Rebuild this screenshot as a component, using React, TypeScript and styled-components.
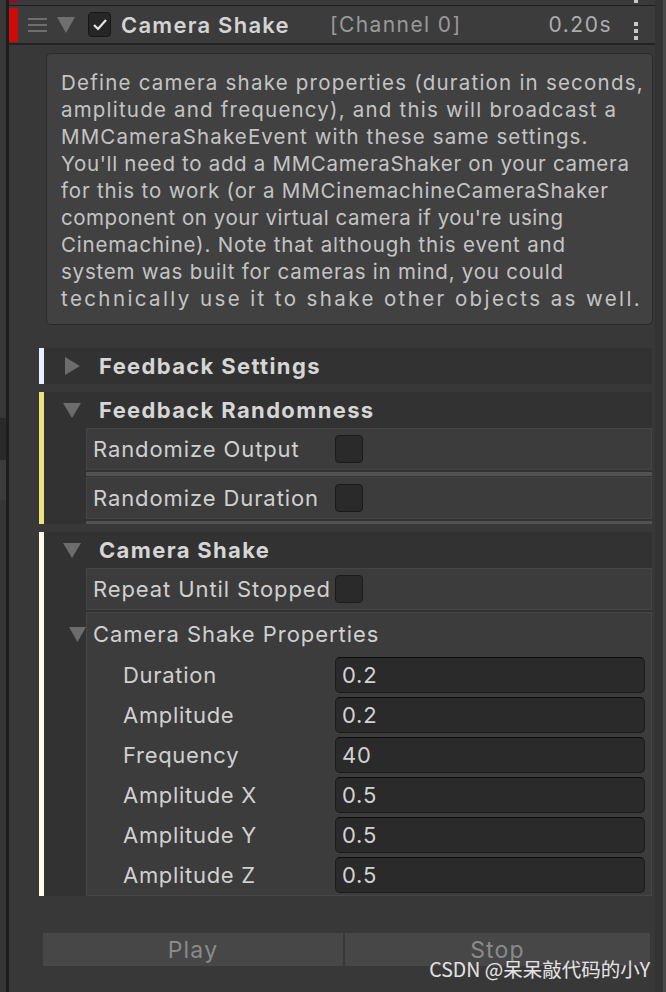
import React from "react";
import styled, { createGlobalStyle } from "styled-components";

const GlobalStyle = createGlobalStyle`
  html, body {
    margin: 0;
    padding: 0;
    background: #383838;
  }
  body {
    font-family: Inter, "Noto Sans", sans-serif;
  }
`;

const Root = styled.div`
  position: relative;
  display: flex;
  width: 666px;
  height: 992px;
  overflow: hidden;
  background: #383838;
`;

const Gutter = styled.div`
  width: 6px;
  display: flex;
  flex-direction: column;
  border-right: 3px solid #1d1d1d;
  background: #363636;
`;

const GutterBlock = styled.div<{ tone: string; h: number }>`
  height: ${(p) => p.h}px;
  background: ${(p) => p.tone};
`;

const Main = styled.div`
  flex: 1;
  display: flex;
  flex-direction: column;
  min-width: 0;
`;

const Scrollbar = styled.div`
  width: 8px;
  background: #333333;
  border-right: 3px solid #484848;
`;

const TopStub = styled.div`
  height: 5px;
  display: flex;
  background: #3a3a3a;
`;

const StubRed = styled.div`
  width: 9px;
  height: 3px;
  background: #8a1030;
`;

const StubDot = styled.div`
  width: 4px;
  height: 3px;
  margin-left: auto;
  margin-right: 17px;
  background: #c8c8c8;
`;

const Header = styled.div`
  height: 37px;
  display: flex;
  align-items: center;
  background: #3c3c3c;
  border-top: 1px solid #1f1f1f;
  border-bottom: 2px solid #232323;
`;

const RedBar = styled.div`
  width: 9px;
  height: 34px;
  background: #d00a0a;
`;

const Hamburger = styled.div`
  width: 19px;
  margin-left: 10px;
  display: flex;
  flex-direction: column;
  gap: 4px;
  span {
    height: 2px;
    background: #6e6e6e;
  }
`;

const HeaderCheck = styled.div`
  width: 21px;
  height: 23px;
  margin-left: 13px;
  border-radius: 4px;
  background: #262626;
  border: 1px solid #161616;
  display: flex;
  align-items: center;
  justify-content: center;
`;

const Title = styled.div`
  width: 209px;
  margin-left: 10px;
  font-size: 22px;
  font-weight: 600;
  letter-spacing: 1.25px;
  color: #d4d4d4;
  white-space: nowrap;
`;

const Channel = styled.div`
  flex: 1;
  font-size: 21px;
  letter-spacing: 1.4px;
  color: #9a9a9a;
  white-space: nowrap;
`;

const Duration = styled.div`
  font-size: 21px;
  letter-spacing: 1.5px;
  color: #acacac;
`;

const Kebab = styled.div`
  width: 4px;
  margin: 12px 17px 0 22px;
  display: flex;
  flex-direction: column;
  gap: 3px;
  span {
    height: 4px;
    background: #c8c8c8;
  }
`;

const Body = styled.div`
  padding: 8px 3px 0 30px;
  display: flex;
  flex-direction: column;
`;

const HelpBox = styled.div`
  margin: 0 -1px 0 7px;
  padding: 15px 0 12px 14px;
  border: 1px solid #2a2a2a;
  border-radius: 5px;
  background: #414141;
  color: #c4c4c4;
  font-size: 20.5px;
  line-height: 27px;
`;

const HelpLine = styled.div<{ spacing: number }>`
  white-space: nowrap;
  letter-spacing: ${(p) => p.spacing}px;
`;

const Sections = styled.div`
  margin-top: 23px;
  display: flex;
  flex-direction: column;
  gap: 8px;
`;

const Section = styled.div`
  display: flex;
`;

const SectionBar = styled.div<{ color: string }>`
  width: 5px;
  background: ${(p) => p.color};
`;

const SectionContent = styled.div`
  flex: 1;
  background: #323232;
`;

const SectionHeader = styled.div`
  height: 36px;
  display: flex;
  align-items: center;
  padding-left: 19px;
`;

const IconSlot = styled.div`
  width: 18px;
  display: flex;
  justify-content: center;
  align-items: center;
`;

const SectionTitle = styled.div`
  margin-left: 18px;
  font-size: 22px;
  font-weight: 700;
  color: #d6d6d6;
  letter-spacing: 1.35px;
`;

const SectionBody = styled.div`
  padding-left: 42px;
  display: flex;
  flex-direction: column;
`;

const Row = styled.div`
  height: 42px;
  box-sizing: border-box;
  display: flex;
  align-items: center;
  padding-left: 6px;
  border: 1px solid #454545;
  background: #3c3c3c;
`;

const RowLabel = styled.div<{ w: number; spacing?: number }>`
  width: ${(p) => p.w}px;
  font-size: 22px;
  letter-spacing: ${(p) => p.spacing ?? 0.9}px;
  color: #d0d0d0;
  white-space: nowrap;
`;

const Separator = styled.div`
  height: 4px;
  margin-top: 2px;
  background: #525252;
`;

const Checkbox = styled.div`
  width: 26px;
  height: 26px;
  border-radius: 4px;
  background: #2a2a2a;
  border: 1px solid #1a1a1a;
`;

const PropBox = styled.div`
  margin-top: 2px;
  border: 1px solid #464646;
  background: #3c3c3c;
`;

const PropHeader = styled.div`
  height: 42px;
  display: flex;
  align-items: center;
`;

const PropTri = styled.div`
  width: 17px;
  margin-left: -18px;
  display: flex;
`;

const PropTitle = styled.div`
  margin-left: 7px;
  font-size: 22px;
  letter-spacing: 0.95px;
  color: #d0d0d0;
`;

const PropRow = styled.div`
  height: 40px;
  display: flex;
  align-items: center;
  padding-left: 36px;
`;

const Field = styled.div`
  flex: 1;
  height: 36px;
  box-sizing: border-box;
  margin-right: 6px;
  padding-left: 6px;
  display: flex;
  align-items: center;
  border: 1px solid #1b1b1b;
  border-top-color: #0f0f0f;
  border-radius: 5px;
  background: #2a2a2a;
  font-size: 22px;
  letter-spacing: 0.8px;
  color: #d2d2d2;
`;

const Buttons = styled.div`
  margin: 37px 2px 0 4px;
  display: flex;
  gap: 2px;
`;

const Button = styled.div<{ w?: number }>`
  ${(p) => (p.w ? `width: ${p.w}px;` : "flex: 1;")}
  height: 33px;
  display: flex;
  align-items: center;
  justify-content: center;
  background: #474747;
  color: #8a8a8a;
  font-size: 23px;
  letter-spacing: 1.2px;
`;

const Watermark = styled.div`
  position: absolute;
  right: 16px;
  bottom: 9px;
  font-family: "Noto Sans CJK SC", "Noto Sans", sans-serif;
  font-size: 19.5px;
  color: #e2e2e2;
  text-shadow: 0 0 1px #555;
`;

const TriDown: React.FC<{ w: number; h: number; color?: string }> = ({ w, h, color = "#6c6c6c" }) => (
  <svg width={w} height={h} viewBox={`0 0 ${w} ${h}`}>
    <polygon points={`0,0 ${w},0 ${w / 2},${h}`} fill={color} />
  </svg>
);

const TriRight: React.FC<{ w: number; h: number }> = ({ w, h }) => (
  <svg width={w} height={h} viewBox={`0 0 ${w} ${h}`}>
    <polygon points={`0,0 ${w},${h / 2} 0,${h}`} fill="#6c6c6c" />
  </svg>
);

// each line of the help text, with its tracking tuned to the reference widths
const helpLines: [string, number][] = [
  ["Define camera shake properties (duration in seconds,", 1.22],
  ["amplitude and frequency), and this will broadcast a", 1.2],
  ["MMCameraShakeEvent with these same settings.", 1.13],
  ["You'll need to add a MMCameraShaker on your camera", 0.68],
  ["for this to work (or a MMCinemachineCameraShaker", 0.83],
  ["component on your virtual camera if you're using", 0.55],
  ["Cinemachine). Note that although this event and", 0.82],
  ["system was built for cameras in mind, you could", 0.77],
  ["technically use it to shake other objects as well.", 2.4],
];

const props = [
  { label: "Duration", value: "0.2" },
  { label: "Amplitude", value: "0.2" },
  { label: "Frequency", value: "40" },
  { label: "Amplitude X", value: "0.5" },
  { label: "Amplitude Y", value: "0.5" },
  { label: "Amplitude Z", value: "0.5" },
];

export default function App() {
  return (
    <Root>
      <GlobalStyle />
      <Gutter>
        <GutterBlock tone="#383838" h={418} />
        <GutterBlock tone="#2a2a2a" h={42} />
        <GutterBlock tone="#3c3c3c" h={40} />
      </Gutter>
      <Main>
        <TopStub>
          <StubRed />
          <StubDot />
        </TopStub>
        <Header>
          <RedBar />
          <Hamburger>
            <span />
            <span />
            <span />
          </Hamburger>
          <IconSlot style={{ marginLeft: 10 }}>
            <TriDown w={18} h={16} color="#6f6f6f" />
          </IconSlot>
          <HeaderCheck>
            <svg width="16" height="14" viewBox="0 0 16 14">
              <polyline points="2,7 6,11 14,2" fill="none" stroke="#e6e6e6" strokeWidth="2.2" />
            </svg>
          </HeaderCheck>
          <Title>Camera Shake</Title>
          <Channel>[Channel 0]</Channel>
          <Duration>0.20s</Duration>
          <Kebab>
            <span />
            <span />
            <span />
          </Kebab>
        </Header>
        <Body>
          <HelpBox>
            {helpLines.map(([l, s]) => (
              <HelpLine key={l} spacing={s}>
                {l}
              </HelpLine>
            ))}
          </HelpBox>
          <Sections>
            <Section>
              <SectionBar color="#e8f0ff" />
              <SectionContent>
                <SectionHeader>
                  <IconSlot>
                    <TriRight w={15} h={18} />
                  </IconSlot>
                  <SectionTitle>Feedback Settings</SectionTitle>
                </SectionHeader>
              </SectionContent>
            </Section>
            <Section>
              <SectionBar color="#ede47a" />
              <SectionContent>
                <SectionHeader>
                  <IconSlot>
                    <TriDown w={18} h={15} />
                  </IconSlot>
                  <SectionTitle>Feedback Randomness</SectionTitle>
                </SectionHeader>
                <SectionBody>
                  <Row>
                    <RowLabel w={242}>Randomize Output</RowLabel>
                    <Checkbox />
                  </Row>
                  <Separator />
                  <Row style={{ marginTop: 1 }}>
                    <RowLabel w={242}>Randomize Duration</RowLabel>
                    <Checkbox />
                  </Row>
                  <Separator style={{ height: 3 }} />
                </SectionBody>
              </SectionContent>
            </Section>
            <Section>
              <SectionBar color="#fffbe8" />
              <SectionContent>
                <SectionHeader>
                  <IconSlot>
                    <TriDown w={18} h={15} />
                  </IconSlot>
                  <SectionTitle>Camera Shake</SectionTitle>
                </SectionHeader>
                <SectionBody>
                  <Row>
                    <RowLabel w={242}>Repeat Until Stopped</RowLabel>
                    <Checkbox />
                  </Row>
                  <PropBox>
                    <PropHeader>
                      <PropTri>
                        <TriDown w={17} h={15} />
                      </PropTri>
                      <PropTitle>Camera Shake Properties</PropTitle>
                    </PropHeader>
                    {props.map((p) => (
                      <PropRow key={p.label}>
                        <RowLabel w={212} spacing={0.7}>
                          {p.label}
                        </RowLabel>
                        <Field>{p.value}</Field>
                      </PropRow>
                    ))}
                  </PropBox>
                </SectionBody>
              </SectionContent>
            </Section>
          </Sections>
          <Buttons>
            <Button w={300}>Play</Button>
            <Button>Stop</Button>
          </Buttons>
        </Body>
      </Main>
      <Scrollbar />
      <Watermark>CSDN @呆呆敲代码的小Y</Watermark>
    </Root>
  );
}
